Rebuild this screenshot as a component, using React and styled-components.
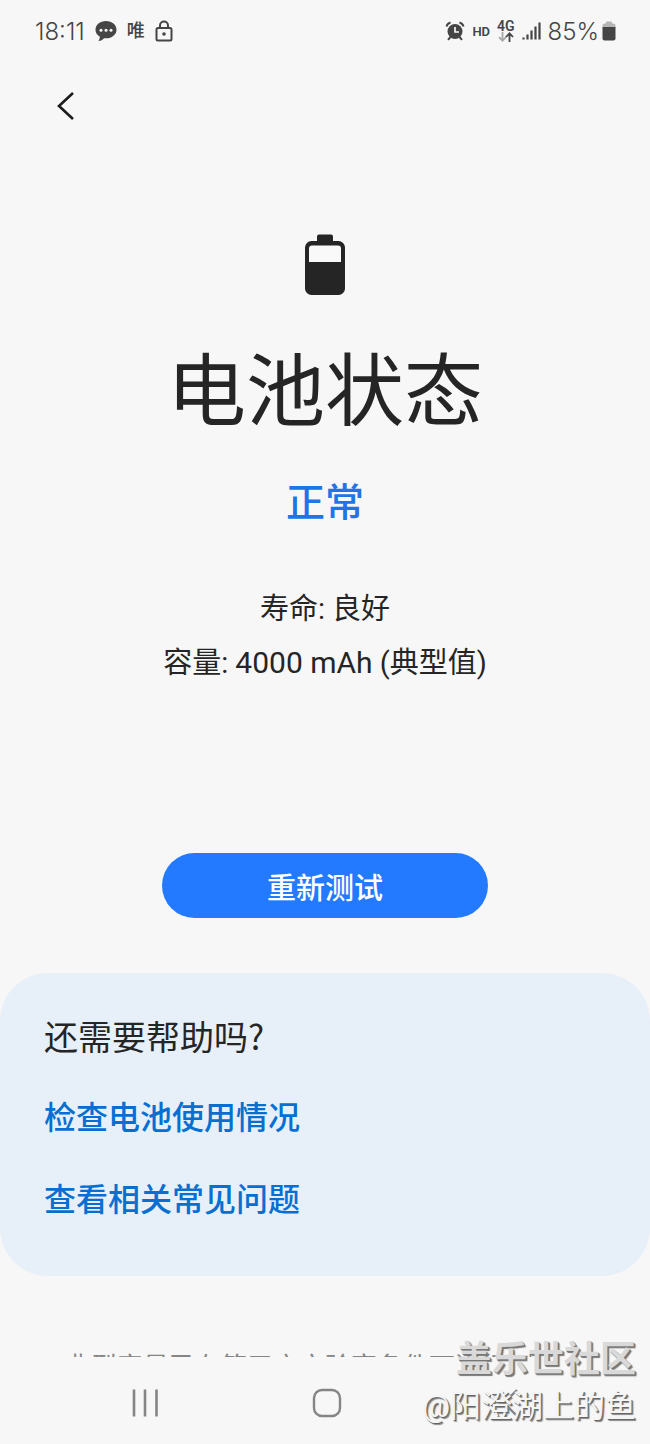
import React from 'react';
import styled, { createGlobalStyle } from 'styled-components';

const links = ['检查电池使用情况', '查看相关常见问题'];

const App = () => {
  return (
    <>
      <GlobalStyle />
      <Screen>
        <StatusBar>
          <StatusGroup $gap={10}>
            <StatusText>18:11</StatusText>
            <ChatIcon />
            <AppMark>唯</AppMark>
            <LockIcon />
          </StatusGroup>
          <StatusGroup $gap={7}>
            <AlarmIcon />
            <HdMark>HD</HdMark>
            <Network>
              4G
              <ArrowsIcon />
            </Network>
            <SignalIcon />
            <BatteryLevel>
              <StatusText>85%</StatusText>
              <SmallBatteryIcon />
            </BatteryLevel>
          </StatusGroup>
        </StatusBar>

        <TopBar>
          <IconButton type="button" aria-label="返回">
            <svg width="20" height="32" viewBox="0 0 20 32" fill="none" stroke="#1c1c1c" strokeWidth="2.6">
              <path d="M17 3L3 16L17 29" />
            </svg>
          </IconButton>
        </TopBar>

        <Content>
          <Summary>
            <BatteryIcon />
            <Title>电池状态</Title>
            <Result>正常</Result>
            <Details>
              <p>寿命: 良好</p>
              <p>
                容量: <Capacity>4000 mAh</Capacity> (典型值)
              </p>
            </Details>
            <RetryButton type="button">重新测试</RetryButton>
          </Summary>

          <HelpCard>
            <HelpTitle>还需要帮助吗?</HelpTitle>
            {links.map((text) => (
              <HelpLink key={text} href="#">
                {text}
              </HelpLink>
            ))}
          </HelpCard>

          <Footnote>典型容量已在第三方实验室条件下进行测试。</Footnote>
        </Content>

        <NavBar>
          <NavButton type="button" aria-label="最近">
            <svg width="28" height="30" viewBox="0 0 28 30" stroke="#858585" strokeWidth="2.6">
              <path d="M3 1.5V28.5M14 1.5V28.5M25.5 1.5V28.5" />
            </svg>
          </NavButton>
          <NavButton type="button" aria-label="主页">
            <svg width="30" height="30" viewBox="0 0 30 30" fill="none" stroke="#858585" strokeWidth="2.4">
              <rect x="2" y="2" width="26" height="26" rx="8" />
            </svg>
          </NavButton>
          <NavButton type="button" aria-label="返回上一级">
            <svg width="18" height="30" viewBox="0 0 18 30" fill="none" stroke="#858585" strokeWidth="2.4">
              <path d="M17 2L4 15L17 28" />
            </svg>
          </NavButton>
        </NavBar>

        <Watermark>
          <WatermarkName>盖乐世社区</WatermarkName>
          <WatermarkUser>@阳澄湖上的鱼</WatermarkUser>
        </Watermark>
      </Screen>
    </>
  );
};

const ChatIcon = () => (
  <svg width="22" height="22" viewBox="0 0 22 22">
    <path
      d="M11 1C5 1 .5 4.700 .5 9.700c0 3 1.600 5.400 4.200 6.900 .2 1.700 -.4 3.200 -1.300 4.400 2.400 -.2 4.400 -1.300 5.700 -2.800 7 .8 12.400 -3.200 12.400 -8.500C21.500 4.700 17 1 11 1Z"
      fill="#454545"
    />
    <g fill="#f7f7f7">
      <circle cx="6" cy="10.2" r="1.5" />
      <circle cx="11" cy="10.2" r="1.5" />
      <circle cx="16" cy="10.2" r="1.5" />
    </g>
  </svg>
);

const LockIcon = () => (
  <svg width="18" height="22" viewBox="0 0 18 22" fill="none" stroke="#454545" strokeWidth="2">
    <rect x="1.5" y="8" width="15" height="12.5" rx="1.5" />
    <path d="M5 8V5.5a4 4 0 0 1 8 0V8" />
    <circle cx="9" cy="14" r="1.8" fill="#454545" stroke="none" />
  </svg>
);

const AlarmIcon = () => (
  <svg width="20" height="20" viewBox="0 0 20 20" fill="none" stroke="#454545" strokeWidth="2">
    <circle cx="10" cy="10.5" r="7.5" fill="#454545" stroke="none" />
    <path d="M1.500 5.500C2 3.500 3.500 2 5.500 1.500M18.500 5.500C18 3.500 16.500 2 14.500 1.500M5.500 16L3 18.800M14.500 16L17 18.800" />
    <path d="M10 6V11H14" stroke="#f7f7f7" strokeWidth="1.7" />
  </svg>
);

const ArrowsIcon = () => (
  <svg width="16" height="10" viewBox="0 0 16 10" fill="none" strokeWidth="1.8">
    <path d="M4.500 0V8.500M1 5.200L4.500 8.700L8 5.200" stroke="#a8a8a8" />
    <path d="M11.500 10V1.500M8 5L11.500 1.300L15 5" stroke="#454545" />
  </svg>
);

const SignalIcon = () => (
  <svg width="19" height="18" viewBox="0 0 19 18" stroke="#454545" strokeWidth="2.2">
    <path d="M1.500 15.500V17.500M5.500 12.500V17.500M9.500 8.500V17.500M13.500 4.500V17.500M17.500 .5V17.500" />
  </svg>
);

const SmallBatteryIcon = () => (
  <svg width="14" height="20" viewBox="0 0 14 20">
    <path d="M4 1.500a1 1 0 0 1 1 -1h4a1 1 0 0 1 1 1V2.500h1.500a2 2 0 0 1 2 2V7H.5V4.500a2 2 0 0 1 2 -2H4Z" fill="#b5b5b5" />
    <path d="M.5 6H13.500V17.500a2 2 0 0 1 -2 2H2.500a2 2 0 0 1 -2 -2Z" fill="#454545" />
  </svg>
);

const BatteryIcon = () => (
  <svg width="42" height="62" viewBox="0 0 42 62">
    <path
      d="M13 2.500A2 2 0 0 1 15 .5H27A2 2 0 0 1 29 2.500V7H34.500A6.500 6.500 0 0 1 41 13.500V54.500A6.500 6.500 0 0 1 34.500 61H7.500A6.500 6.500 0 0 1 1 54.500V13.500A6.500 6.500 0 0 1 7.500 7H13Z"
      fill="#252525"
    />
    <path d="M5 28V14.500A3 3 0 0 1 8 11.500H34A3 3 0 0 1 37 14.500V28Z" fill="#f9f9f9" />
  </svg>
);

const GlobalStyle = createGlobalStyle`
  * {
    box-sizing: border-box;
  }

  body {
    margin: 0;
    background: #f7f7f7;
    color: #252525;
    font-family: Roboto, 'Noto Sans CJK SC', sans-serif;
  }

  h1, h2, p {
    margin: 0;
    font-weight: 400;
  }

  button {
    padding: 0;
    border: 0;
    background: none;
    font-family: inherit;
    cursor: pointer;
  }

  svg {
    display: block;
    flex-shrink: 0;
  }
`;

const Screen = styled.div`
  position: relative;
  display: flex;
  flex-direction: column;
  height: 100vh;
  overflow: hidden;
`;

const StatusBar = styled.header`
  display: flex;
  justify-content: space-between;
  align-items: center;
  height: 62px;
  padding: 0 34px 0 35px;
  flex-shrink: 0;
  color: #454545;
`;

const StatusGroup = styled.div`
  display: flex;
  align-items: center;
  gap: ${({ $gap }) => $gap}px;
`;

const StatusText = styled.span`
  font-family: Inter, Roboto, sans-serif;
  font-size: 24px;
  font-weight: 300;
`;

const AppMark = styled.span`
  font-size: 18px;
  font-weight: 500;
  line-height: 22px;
`;

const HdMark = styled.span`
  font-size: 13px;
  font-weight: 600;
`;

const Network = styled.span`
  display: flex;
  flex-direction: column;
  align-items: center;
  font-size: 14px;
  font-weight: 600;
  line-height: 12px;
`;

const BatteryLevel = styled.div`
  display: flex;
  align-items: center;
  gap: 3px;
`;

const TopBar = styled.div`
  display: flex;
  align-items: center;
  height: 88px;
  padding: 0 44px;
  flex-shrink: 0;
`;

const IconButton = styled.button`
  display: grid;
  place-items: center;
  width: 44px;
  height: 44px;
`;

const Content = styled.main`
  flex: 1;
  min-height: 0;
  overflow-y: auto;
  scrollbar-width: none;
`;

const Summary = styled.section`
  display: flex;
  flex-direction: column;
  align-items: center;
  padding: 84px 24px 55px;
  text-align: center;
`;

const Title = styled.h1`
  margin-top: 49px;
  font-size: 79px;
  line-height: 96px;
`;

const Result = styled.p`
  margin-top: 38px;
  color: #1f74e8;
  font-size: 39px;
  font-weight: 500;
  line-height: 48px;
`;

const Details = styled.div`
  margin-top: 55px;
  font-size: 29px;
  line-height: 54px;
`;

const Capacity = styled.span`
  font-size: 30px;
  line-height: 1;
`;

const RetryButton = styled.button`
  width: 54%;
  height: 65px;
  margin-top: 163px;
  border-radius: 33px;
  background: #237aff;
  color: #fff;
  font-size: 29px;
  font-weight: 500;
`;

const HelpCard = styled.section`
  display: flex;
  flex-direction: column;
  align-items: flex-start;
  gap: 34px;
  padding: 39px 44px 52px;
  border-radius: 48px;
  background: #e7eff8;
`;

const HelpTitle = styled.h2`
  font-family: 'Noto Sans CJK SC', sans-serif;
  font-size: 34px;
  line-height: 48px;
`;

const HelpLink = styled.a`
  color: #066fd1;
  font-size: 32px;
  font-weight: 500;
  line-height: 48px;
  text-decoration: none;
`;

const Footnote = styled.p`
  padding: 72px 24px 40px;
  color: #858585;
  font-size: 26px;
  line-height: 38px;
  text-align: center;
`;

const NavBar = styled.nav`
  display: grid;
  grid-template-columns: repeat(3, 1fr);
  height: 87px;
  padding: 5px 50px 0 54px;
  flex-shrink: 0;
`;

const NavButton = styled.button`
  display: grid;
  place-items: center;
  height: 82px;
`;

const Watermark = styled.div`
  position: absolute;
  right: 14px;
  bottom: 14px;
  display: flex;
  flex-direction: column;
  align-items: flex-end;
  pointer-events: none;
`;

const WatermarkName = styled.span`
  color: #d9d9d9;
  font-size: 36px;
  font-weight: 700;
  line-height: 48px;
  text-shadow: 1px 1px 0 #777, 2px 2px 1px #777;
`;

const WatermarkUser = styled.span`
  color: #f4f4f4;
  font-size: 31px;
  line-height: 46px;
  text-shadow: 1px 1px 0 #666, 2px 2px 1px #888;
`;

export default App;
